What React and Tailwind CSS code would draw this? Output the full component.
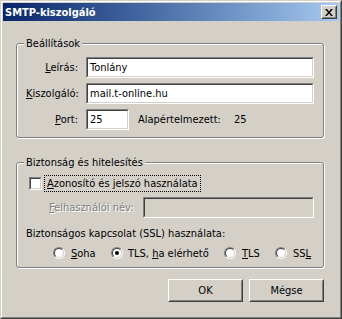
import React from 'react';

function Sunken({ className, children, disabled }) {
	return (
		<div className={"border border-t-[#808080] border-l-[#808080] border-r-white border-b-white " + className}>
			<div className={"h-full border border-t-[#404040] border-l-[#404040] border-r-[#d4d0c8] border-b-[#d4d0c8] flex items-center pl-[2px] " + (disabled ? "bg-[#d4d0c8]" : "bg-white")}>
				{children}
			</div>
		</div>
	);
}

function Raised({ className, children }) {
	return (
		<div className={"border border-t-white border-l-white border-r-[#404040] border-b-[#404040] " + className}>
			<div className="h-full border border-t-[#d4d0c8] border-l-[#d4d0c8] border-r-[#808080] border-b-[#808080] flex items-center justify-center">
				{children}
			</div>
		</div>
	);
}

function Radio({ checked }) {
	return (
		<span className="w-[12px] h-[12px] shrink-0 rounded-full border border-t-[#808080] border-l-[#808080] border-r-white border-b-white flex">
			<span className="flex-1 rounded-full border border-t-[#404040] border-l-[#404040] border-r-[#d4d0c8] border-b-[#d4d0c8] bg-white flex items-center justify-center">
				{checked && <span className="w-[4px] h-[4px] rounded-full bg-black" />}
			</span>
		</span>
	);
}

function Group({ title, className, children }) {
	return (
		<fieldset className={"w-[308px] border border-[#808080] rounded-[3px] shadow-[inset_1px_1px_0_#fff,1px_1px_0_#fff] " + className}>
			<legend className="ml-[7px] px-[2px] bg-[#d4d0c8]">{title}</legend>
			{children}
		</fieldset>
	);
}

function App() {
	return (
		<div className="w-[342px] h-[319px] bg-[#d4d0c8] border border-t-[#d4d0c8] border-l-[#d4d0c8] border-r-[#404040] border-b-[#404040] text-[11px] leading-[13px] text-black font-['DejaVu_Sans_Condensed','Liberation_Sans',sans-serif]">
			<div className="h-full border border-t-white border-l-white border-r-[#808080] border-b-[#808080] p-px flex flex-col">
				<div className="h-[18px] flex items-center justify-between pl-[2px] pr-[2px] bg-linear-to-r from-[#0a246a] to-[#a6caf0]">
					<span className="font-bold text-white">SMTP-kiszolgáló</span>
					<Raised className="w-[16px] h-[14px] bg-[#d4d0c8]">
						<svg width="8" height="7" viewBox="0 0 8 7">
							<path d="M0 0h2l2 2.5L6 0h2L5 3.5 8 7H6L4 4.5 2 7H0l3-3.5z" fill="#000" />
						</svg>
					</Raised>
				</div>

				<div className="pl-[13px] flex flex-col">
					<Group title="Beállítások" className="mt-[16px]">
						<div className="pl-[9px] pt-[7px] pb-[7px] flex flex-col gap-[5px]">
							<div className="flex items-center h-[21px]">
								<span className="w-[52px] text-right"><u>L</u>eírás:</span>
								<Sunken className="ml-[8px] w-[228px] h-[21px]">Tonlány</Sunken>
							</div>
							<div className="flex items-center h-[21px]">
								<span className="w-[52px] text-right"><u>K</u>iszolgáló:</span>
								<Sunken className="ml-[8px] w-[228px] h-[21px]">mail.t-online.hu</Sunken>
							</div>
							<div className="flex items-center h-[21px]">
								<span className="w-[52px] text-right"><u>P</u>ort:</span>
								<Sunken className="ml-[8px] w-[43px] h-[21px]">25</Sunken>
								<span className="ml-[9px] w-[96px]">Alapértelmezett:</span>
								<span>25</span>
							</div>
						</div>
					</Group>

					<Group title="Biztonság és hitelesítés" className="mt-[18px]">
						<div className="pl-[9px] pt-[6px] pb-[8px] flex flex-col">
							<div className="flex items-center h-[17px] pl-[3px]">
								<Sunken className="w-[13px] h-[13px]" />
								<span className="ml-[2px] border border-dotted border-black px-[2px] leading-[15px]"><u>A</u>zonosító és jelszó használata</span>
							</div>
							<div className="flex items-center h-[21px] mt-[5px] pl-[23px]">
								<span className="w-[94px] text-[#808080] [text-shadow:1px_1px_0_#fff]"><u>F</u>elhasználói név:</span>
								<Sunken disabled className="w-[171px] h-[21px]" />
							</div>
							<div className="mt-[9px] h-[13px]">Biztonságos kapcsolat (SSL) használata:</div>
							<div className="mt-[7px] h-[12px] pl-[27px] flex items-center">
								<div className="w-[58px] flex items-center gap-[6px]"><Radio /><span><u>S</u>oha</span></div>
								<div className="w-[113px] flex items-center gap-[5px]"><Radio checked /><span>TLS, <u>h</u>a elérhető</span></div>
								<div className="w-[51px] flex items-center gap-[6px]"><Radio /><span><u>T</u>LS</span></div>
								<div className="flex items-center gap-[6px]"><Radio /><span>SS<u>L</u></span></div>
							</div>
						</div>
					</Group>

					<div className="w-[308px] mt-[11px] flex justify-end gap-[6px]">
						<Raised className="w-[75px] h-[23px]">OK</Raised>
						<Raised className="w-[75px] h-[23px]">Mégse</Raised>
					</div>
				</div>
			</div>
		</div>
	);
}

export default App;
